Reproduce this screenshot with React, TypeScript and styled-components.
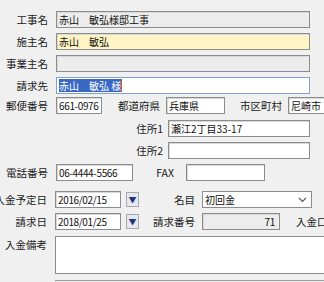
import { FC } from 'react';
import styled, { createGlobalStyle } from 'styled-components';

const GlobalStyle = createGlobalStyle`
  body {
    margin: 0;
    background: #f0f0f0;
    font-family: "Noto Sans CJK JP", "DejaVu Sans", sans-serif;
    font-size: 10.5px;
    color: #111;
  }
`;

const App: FC = () => {
  return (
    <>
      <GlobalStyle />
      <Page>
        <Row $mt={11}>
          <Label $w={48}>工事名</Label>
          <Field $w={254} $ml={8} $variant="readonly">
            赤山　敏弘様邸工事
          </Field>
        </Row>
        <Row $mt={5}>
          <Label $w={48}>施主名</Label>
          <Field $w={254} $ml={8} $variant="yellow">
            赤山　敏弘
          </Field>
        </Row>
        <Row $mt={5}>
          <Label $w={48}>事業主名</Label>
          <Field $w={254} $ml={8} $variant="readonly" />
        </Row>
        <Row $mt={5}>
          <Label $w={48}>請求先</Label>
          <Field $w={254} $ml={8} $variant="focus">
            <Selected>赤山　敏弘 様</Selected>
            <Caret />
          </Field>
        </Row>
        <Row $mt={3}>
          <Label $w={48}>郵便番号</Label>
          <Field $w={46} $ml={8} $narrow>
            661-0976
          </Field>
          <Label $w={58}>都道府県</Label>
          <Field $w={59} $ml={6}>
            兵庫県
          </Field>
          <Label $w={57}>市区町村</Label>
          <Field $w={60} $ml={6}>
            尼崎市
          </Field>
        </Row>
        <Row $mt={6}>
          <Label $w={163}>住所1</Label>
          <Field $w={142} $ml={5}>
            瀬江2丁目33-17
          </Field>
        </Row>
        <Row $mt={5}>
          <Label $w={163}>住所2</Label>
          <Field $w={142} $ml={5} />
        </Row>
        <Row $mt={5}>
          <Label $w={48}>電話番号</Label>
          <Field $w={77} $ml={8} $narrow>
            06-4444-5566
          </Field>
          <Label $w={41}>FAX</Label>
          <Field $w={79} $ml={12} />
        </Row>
        <Row $mt={10}>
          <Label $w={47}>入金予定日</Label>
          <Field $w={66} $ml={8} $narrow>
            2016/02/15
          </Field>
          <DropButton>▼</DropButton>
          <Label $w={56}>名目</Label>
          <Select>
            初回金
            <svg width="9" height="6" viewBox="0 0 9 6">
              <polyline points="1,1 4.5,4.5 8,1" fill="none" stroke="#555" strokeWidth="1.1" />
            </svg>
          </Select>
        </Row>
        <Row $mt={5}>
          <Label $w={47}>請求日</Label>
          <Field $w={66} $ml={8} $narrow>
            2018/01/25
          </Field>
          <DropButton>▼</DropButton>
          <Label $w={56}>請求番号</Label>
          <Field $w={78} $ml={7} $variant="number" $narrow>
            71
          </Field>
          <Label $w={40} $align="start" $ml={16}>
            入金口座
          </Label>
        </Row>
        <MemoRow>
          <Label $w={47} $top>
            入金備考
          </Label>
          <Memo />
        </MemoRow>
        <BottomRow>
          <NextBox />
        </BottomRow>
      </Page>
    </>
  );
};

type Variant = 'normal' | 'readonly' | 'yellow' | 'focus' | 'number';

const backgrounds: Record<Variant, string> = {
  normal: '#ffffff',
  readonly: '#ececec',
  yellow: '#fff4c4',
  focus: '#ffffff',
  number: '#ececec',
};

const Page = styled.div`
  width: 324px;
  height: 282px;
  overflow: hidden;
`;

const Row = styled.div<{ $mt: number }>`
  display: flex;
  align-items: center;
  height: 17px;
  margin-top: ${(p) => p.$mt}px;
`;

const Label = styled.div<{ $w: number; $align?: 'start'; $ml?: number; $top?: boolean }>`
  display: flex;
  justify-content: ${(p) => (p.$align === 'start' ? 'flex-start' : 'flex-end')};
  align-self: ${(p) => (p.$top ? 'flex-start' : 'center')};
  width: ${(p) => p.$w}px;
  margin-left: ${(p) => p.$ml ?? 0}px;
  flex-shrink: 0;
  white-space: nowrap;
  line-height: 17px;
  color: #1a1a1a;
`;

const Field = styled.div<{ $w: number; $ml: number; $variant?: Variant; $narrow?: boolean }>`
  display: flex;
  align-items: center;
  justify-content: ${(p) => (p.$variant === 'number' ? 'flex-end' : 'flex-start')};
  box-sizing: border-box;
  width: ${(p) => p.$w}px;
  height: 17px;
  margin-left: ${(p) => p.$ml}px;
  padding: 0 ${(p) => (p.$variant === 'number' ? 4 : 2)}px 0 2px;
  flex-shrink: 0;
  overflow: hidden;
  white-space: nowrap;
  font-size: ${(p) => (p.$narrow ? 10 : 10)}px;
  letter-spacing: ${(p) => (p.$narrow ? '-0.35px' : '0')};
  line-height: 15px;
  background: ${(p) => backgrounds[p.$variant ?? 'normal']};
  border: 1px solid ${(p) => (p.$variant === 'focus' ? '#7fa2d6' : '#8c8c8c')};
  box-shadow: ${(p) => (p.$variant === 'focus' ? 'none' : 'inset 1px 1px 0 #d8d8d8')};
`;

const Selected = styled.span`
  background: #3868c4;
  color: #ffffff;
  line-height: 13px;
`;

const Caret = styled.span`
  width: 1px;
  height: 13px;
  background: #d05a20;
`;

const DropButton = styled.div`
  display: flex;
  align-items: center;
  justify-content: center;
  box-sizing: border-box;
  width: 13px;
  height: 15px;
  margin-left: 5px;
  flex-shrink: 0;
  font-size: 8px;
  color: #1f3580;
  background: #e6e8ee;
  border: 1px solid #a8a8b0;
`;

const Select = styled.div`
  display: flex;
  align-items: center;
  justify-content: space-between;
  box-sizing: border-box;
  width: 110px;
  height: 17px;
  margin-left: 7px;
  padding: 0 4px 0 2px;
  flex-shrink: 0;
  font-size: 10px;
  line-height: 15px;
  background: #ffffff;
  border: 1px solid #8c8c8c;
`;

const MemoRow = styled.div`
  display: flex;
  margin-top: 6px;
  height: 38px;
`;

const Memo = styled.div`
  box-sizing: border-box;
  width: 280px;
  height: 38px;
  margin-left: 8px;
  flex-shrink: 0;
  background: #ffffff;
  border: 1px solid #8c8c8c;
`;

const BottomRow = styled.div`
  display: flex;
  margin-top: 6px;
  padding-left: 55px;
`;

const NextBox = styled.div`
  width: 280px;
  height: 10px;
  border-top: 1px solid #9a9a9a;
`;

export default App;
